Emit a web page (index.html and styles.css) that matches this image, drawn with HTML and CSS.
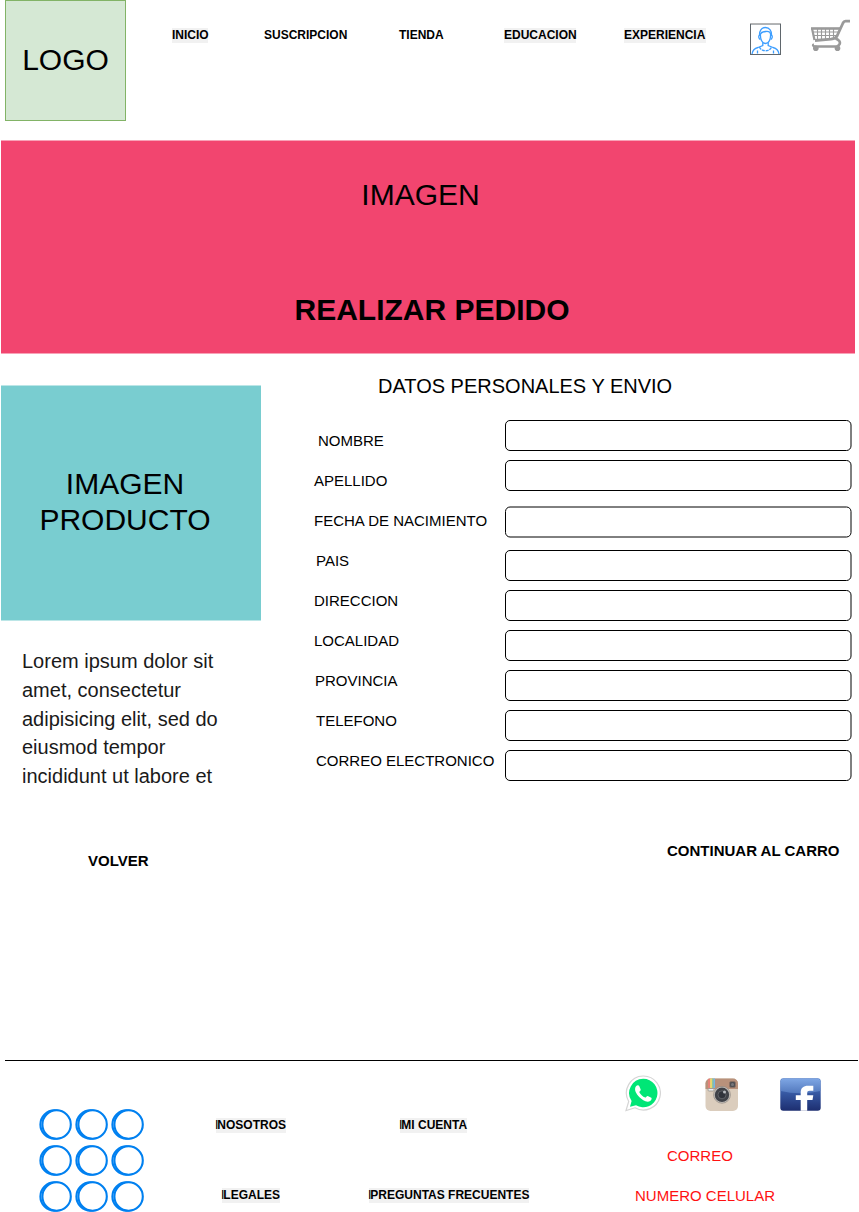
FILE: index.html
```html
<!DOCTYPE html>
<html lang="es">
<head>
<meta charset="utf-8">
<title>Realizar pedido</title>
<link rel="stylesheet" href="styles.css">
</head>
<body>
<header class="header">
  <div class="logo">LOGO</div>
  <nav class="nav">
    <a class="tag marked inicio">INICIO</a>
    <a class="tag suscripcion">SUSCRIPCION</a>
    <a class="tag tienda">TIENDA</a>
    <a class="tag marked educacion">EDUCACION</a>
    <a class="tag marked experiencia">EXPERIENCIA</a>
  </nav>
  <svg class="user" width="31" height="32" viewBox="0 0 31 32">
    <rect x=".5" y="1" width="30" height="30.5" fill="#fff" stroke="#5f666c"/>
    <path d="M0 .5H31" stroke="#b5b5b5"/>
    <g fill="none" stroke="#3d9eff" stroke-width="1.300">
      <path d="M9.600 13C9 8 11.500 4.500 15.500 4.500S22 8 21.400 13"/>
      <path d="M10.500 11C11.500 8.500 13.500 9 15.500 8.500 18 8 20 8.500 20.800 11"/>
      <path d="M10.500 10.500C10 16 12 20.500 15.500 20.500S21 16 20.500 10.500"/>
      <path d="M9.500 12.500C8.300 12.500 8.500 16 10.500 16.500M21.500 12.500C22.700 12.500 22.500 16 20.500 16.500"/>
      <path d="M12.800 19.500V22.500L8 24.500C4 25.500 2.500 27.500 2 31M18.200 19.500V22.500L23 24.500C27 25.500 28.500 27.500 29 31"/>
      <path d="M9.500 24C11 29 20 29 21.500 24M7.500 27.500V31M23.500 27.500V31" stroke-dasharray="3 .8"/>
    </g>
  </svg>
  <svg class="cart" width="41" height="33" viewBox="0 0 41 33">
    <g fill="none" stroke="#9a9a9a">
      <path d="M40 2.200H35.500C34 2.200 33.500 3 33 4L27.500 16C26.500 19 24 19.800 21 20.200L5 21.500" stroke-width="2.800"/>
      <path d="M1 9.500H30" stroke-width="2.600"/>
      <path d="M2 9.500L4.500 21" stroke-width="2.200"/>
      <path d="M3 13H28M3.500 16.500H27M7.500 9V21M11.500 9V21M15.500 9V20.500M19.500 9V20M23.500 9V19" stroke-width="1.100"/>
      <path d="M25.500 19.500C28.500 20.500 31.500 23 29 26L27 27.500H5.500C3 27.500 2.500 26 4 25.500" stroke-width="2.600"/>
    </g>
    <g fill="#9a9a9a"><circle cx="5.800" cy="29.300" r="2.800"/><circle cx="27.500" cy="29.300" r="2.800"/></g>
  </svg>
</header>

<section class="banner">
  <div class="banner-image">IMAGEN</div>
  <h1 class="banner-title">REALIZAR PEDIDO</h1>
</section>

<main class="main">
  <aside class="product">
    <div class="product-image">IMAGEN<br>PRODUCTO</div>
    <p class="product-text">Lorem ipsum dolor sit<br>amet, consectetur<br>adipisicing elit, sed do<br>eiusmod tempor<br>incididunt ut labore et</p>
    <a class="action back">VOLVER</a>
  </aside>
  <section class="order">
    <h2 class="order-title">DATOS PERSONALES Y ENVIO</h2>
    <form class="form">
      <div class="row"><span class="label in4">NOMBRE</span><svg class="field" width="348" height="32"><rect x=".5" y=".5" width="345.500" height="30" rx="4.500"/></svg></div>
      <div class="row"><span class="label">APELLIDO</span><svg class="field" width="348" height="32"><rect x=".5" y=".5" width="345.500" height="30" rx="4.500"/></svg></div>
      <div class="row"><span class="label">FECHA DE NACIMIENTO</span><svg class="field drop6" width="348" height="32"><rect x=".5" y="1" width="345.500" height="30" rx="4.500"/></svg></div>
      <div class="row"><span class="label in2">PAIS</span><svg class="field drop10" width="348" height="32"><rect x=".5" y=".5" width="345.500" height="30" rx="4.500"/></svg></div>
      <div class="row"><span class="label">DIRECCION</span><svg class="field drop10" width="348" height="32"><rect x=".5" y=".5" width="345.500" height="30" rx="4.500"/></svg></div>
      <div class="row"><span class="label">LOCALIDAD</span><svg class="field drop10" width="348" height="32"><rect x=".5" y=".5" width="345.500" height="30" rx="4.500"/></svg></div>
      <div class="row"><span class="label in1">PROVINCIA</span><svg class="field drop10" width="348" height="32"><rect x=".5" y=".5" width="345.500" height="30" rx="4.500"/></svg></div>
      <div class="row"><span class="label in2">TELEFONO</span><svg class="field drop10" width="348" height="32"><rect x=".5" y=".5" width="345.500" height="30" rx="4.500"/></svg></div>
      <div class="row"><span class="label in2">CORREO ELECTRONICO</span><svg class="field drop10" width="348" height="32"><rect x=".5" y=".5" width="345.500" height="30" rx="4.500"/></svg></div>
    </form>
    <a class="action next">CONTINUAR AL CARRO</a>
  </section>
</main>

<footer class="footer">
  <svg class="dots" width="108" height="104" viewBox="0 0 108 104">
    <defs>
      <g id="dot"><circle cx="15.600" cy="15.500" r="14.200"/><circle cx="17.600" cy="15.500" r="14.200"/></g>
    </defs>
    <g fill="#fff" stroke="#0080f0" stroke-width="2.100">
      <use href="#dot"/><use href="#dot" x="36"/><use href="#dot" x="72"/>
      <use href="#dot" y="36"/><use href="#dot" x="36" y="36"/><use href="#dot" x="72" y="36"/>
      <use href="#dot" y="72"/><use href="#dot" x="36" y="72"/><use href="#dot" x="72" y="72"/>
    </g>
  </svg>
  <div class="links">
    <a class="tag marked"><span class="bar">I</span>NOSOTROS</a>
    <a class="tag marked legales"><span class="bar">I</span>LEGALES</a>
  </div>
  <div class="links account">
    <a class="tag marked cuenta"><span class="bar">I</span>MI CUENTA</a>
    <a class="tag marked"><span class="bar">I</span>PREGUNTAS FRECUENTES</a>
  </div>
  <div class="contact">
    <div class="social">
      <svg width="36" height="37" viewBox="0 0 36 37">
        <path d="M18.200 1A17 17 0 1 1 10 32.800L1 35.500 3.700 26.500A17 17 0 0 1 18.200 1Z" fill="#fff" stroke="#d5d5d5" stroke-width="1.200"/>
        <path d="M18.200 3.800A14.200 14.200 0 1 1 11 30.200L5 31.800 6.600 26A14.200 14.200 0 0 1 18.200 3.800Z" fill="#00e676"/>
        <path d="M11 11.200C12 10 13.700 9.800 14.200 11L15.700 14.400C16 15.300 14.500 16.400 14.200 17 15.500 19.600 17.500 21.500 20.300 22.600 21 22.500 21.800 20.800 22.700 20.900L26.300 22.700C27 23.200 26.600 24.800 25.500 25.800 22 28.200 17.500 25.300 14.500 22.300 11.500 19.200 8.500 14.500 11 11.200Z" fill="#fff"/>
      </svg>
      <svg class="instagram" width="34" height="34" viewBox="0 0 34 34">
        <defs><clipPath id="body"><rect x=".5" y=".5" width="32.500" height="32.500" rx="5"/></clipPath></defs>
        <g clip-path="url(#body)">
          <path d="M0 0H34V34H0Z" fill="#dbcdbd"/>
          <path d="M0 0H34V11H0Z" fill="#b8917b"/>
          <path d="M3 0H5V10H3Z" fill="#e58278"/><path d="M5 0H7V10H5Z" fill="#ecd36e"/><path d="M7 0H8.500V10H7Z" fill="#8fcb9a"/><path d="M8.500 0H10V10H8.500Z" fill="#72b8e8"/>
        </g>
        <rect x="3" y="10.500" width="6" height="2.500" rx="1" fill="#eee" stroke="#8c8985" stroke-width=".7"/>
        <rect x="24.500" y="3.500" width="6" height="6" rx="1.500" fill="#505054" stroke="#8e7264" stroke-width=".7"/>
        <circle cx="27.500" cy="6.500" r="1.500" fill="#77777b"/>
        <circle cx="17" cy="16.800" r="8.400" fill="#c9c5c0" stroke="#8c8580" stroke-width=".7"/>
        <circle cx="17" cy="16.800" r="7.200" fill="#404248"/>
        <circle cx="17" cy="16.800" r="4" fill="#30333b" stroke="#686b70" stroke-width=".8"/>
        <circle cx="19.500" cy="14" r="1.500" fill="#b8bbc0"/>
      </svg>
      <svg class="facebook" width="41" height="33" viewBox="0 0 41 33">
        <defs><linearGradient id="blue" x1="0" y1="0" x2="0" y2="1"><stop offset="0" stop-color="#5681ca"/><stop offset=".5" stop-color="#34559f"/><stop offset="1" stop-color="#1d2e70"/></linearGradient>
        <linearGradient id="shine" x1="0" y1="0" x2="0" y2="1"><stop offset="0" stop-color="#7ea6e4"/><stop offset="1" stop-color="#5278bd"/></linearGradient></defs>
        <rect x=".3" y=".3" width="40.400" height="32.400" rx="3" fill="url(#blue)"/>
        <path d="M.7 3.500Q.7.700 3.500.700H37.500Q40.300.700 40.300 3.500V13Q20 17.500.7 13Z" fill="url(#shine)"/>
        <path d="M20.700 32.800V22H15.800V17.200H20.700V14.500C20.700 9.800 23.500 7.700 28 7.700H33.300V12.800H29.800C28 12.800 27.200 13.600 27.200 15V17.200H33.300L32.500 22H27.200V32.800Z" fill="#fff"/>
      </svg>
    </div>
    <div class="contact-line">CORREO</div>
    <div class="contact-line phone">NUMERO CELULAR</div>
  </div>
</footer>
</body>
</html>
```

FILE: styles.css
```css
* { box-sizing: border-box; }
body {
  margin: 0;
  width: 859px;
  height: 1212px;
  overflow: hidden;
  background: #fff;
  color: #000;
  font-family: "Liberation Sans", Arial, sans-serif;
}
svg { display: block; flex: none; }
h1, h2, p { margin: 0; font-weight: normal; }

.header { display: flex; align-items: flex-start; height: 140px; padding-left: 5px; }
.logo {
  width: 121px;
  height: 121px;
  flex: none;
  background: #d5e8d4;
  border: 1px solid #82b366;
  font-size: 30px;
  line-height: 118px;
  text-align: center;
}
.nav { display: flex; width: 624px; flex: none; padding: 28px 0 0 46px; }
.tag {
  display: block;
  height: 15px;
  flex: none;
  font-size: 12px;
  font-weight: bold;
  line-height: 14px;
  white-space: nowrap;
}
.marked { background: #f1f1f1; }
.inicio { width: 36px; }
.suscripcion { width: 83px; margin-left: 56px; }
.tienda { width: 44px; margin-left: 52px; }
.educacion { width: 72px; margin-left: 61px; }
.experiencia { width: 82px; margin-left: 48px; }
.user { margin-top: 23px; }
.cart { margin: 19px 0 0 29px; }

.banner {
  width: 854px;
  height: 214px;
  margin-left: 1px;
  background: #f2456f;
  border: solid #f8a2b7;
  border-width: 1px 0;
  text-align: center;
  font-size: 30px;
  line-height: 36px;
}
.banner-image { padding: 36px 15px 0 0; }
.banner-title { padding: 79px 0 0 8px; font-size: 30px; font-weight: bold; }

.main { display: flex; height: 706px; padding-left: 1px; }
.product { width: 312px; flex: none; padding-top: 31px; }
.product-image {
  width: 260px;
  height: 236px;
  padding: 80px 12px 0 0;
  background: #79cdd0;
  border: solid #bce6e7;
  border-width: 1px 0;
  font-size: 30px;
  line-height: 36px;
  text-align: center;
}
.product-text {
  padding: 26px 0 0 21px;
  color: #1a1a1a;
  font-size: 20px;
  line-height: 28.8px;
  white-space: nowrap;
}
.action { display: block; font-size: 15px; font-weight: bold; line-height: 18px; white-space: nowrap; }
.back { padding: 61px 0 0 87px; }
.order { width: 545px; flex: none; }
.order-title { padding: 20px 0 0 65px; font-size: 20px; line-height: 24px; }
.form { padding-top: 22px; }
.row { display: flex; height: 40px; }
.label { width: 192px; flex: none; padding-left: 1px; font-size: 15px; line-height: 42px; white-space: nowrap; }
.in1 { padding-left: 2px; }
.in2 { padding-left: 3px; }
.in4 { padding-left: 5px; }
.field { fill: #fff; stroke: #000; stroke-width: 1; }
.drop6 { margin-top: 6px; }
.drop10 { margin-top: 10px; }
.next { padding: 62px 0 0 354px; }

.footer {
  display: flex;
  width: 853px;
  height: 152px;
  margin-left: 5px;
  border-top: 1px solid #000;
}
.dots { margin: 48px 0 0 34px; }
.links {
  display: flex;
  flex-direction: column;
  align-items: flex-start;
  gap: 55px;
  width: 153px;
  flex: none;
  padding-top: 57px;
  margin-left: 69px;
}
.account { width: 252px; margin-left: 0; }
.legales { margin-left: 6px; }
.cuenta { margin-left: 31px; }
.bar { display: inline-block; width: 1.3px; text-indent: -1px; font-weight: normal; }
.contact { flex: none; width: 232px; }
.social { display: flex; height: 85px; padding: 14px 0 0 4px; }
.instagram { margin: 3px 0 0 44px; }
.facebook { margin: 3px 0 0 41px; }
.contact-line { padding-left: 46px; color: #f11; font-size: 15px; line-height: 20px; }
.phone { padding: 20px 0 0 14px; }
```
